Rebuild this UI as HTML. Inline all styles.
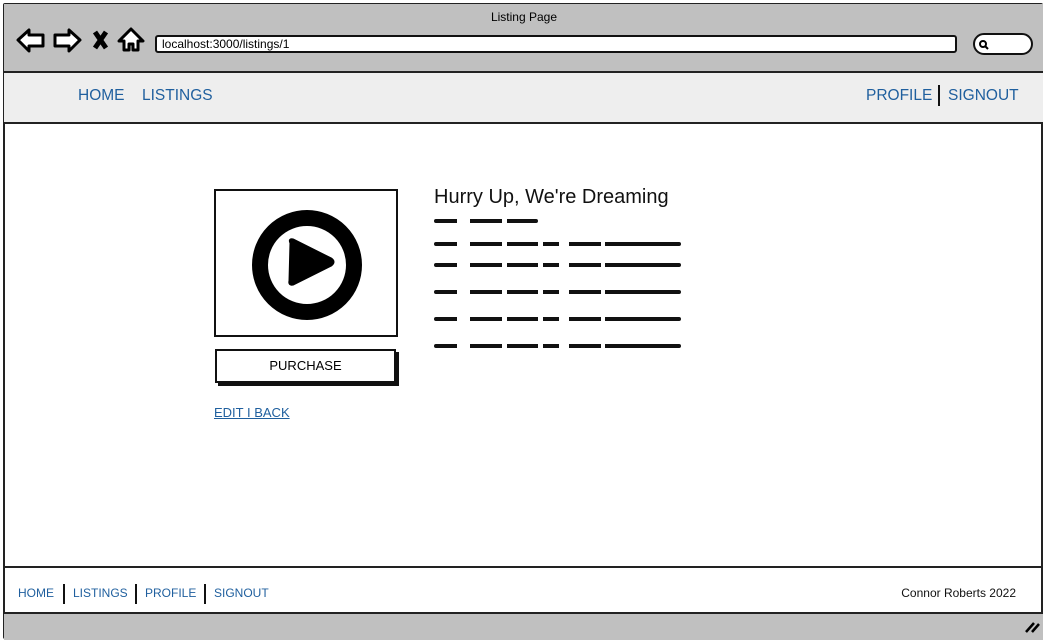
<!DOCTYPE html>
<html><head><style>
body{margin:0;width:1048px;height:644px;background:#fff;position:relative;overflow:hidden;font-family:"Liberation Sans",sans-serif}
.a{position:absolute}
.nav{color:#1f5f9e;font-size:15.5px}
.sq{position:absolute;height:4px;background:#111;border-radius:2px}
.fl{color:#1f5f9e;font-size:12px}
.ln{width:247px;background:linear-gradient(90deg,#111 0 23px,transparent 23px 36px,#111 36px 68px,transparent 68px 73px,#111 73px 104px,transparent 104px 109px,#111 109px 125px,transparent 125px 135px,#111 135px 167px,transparent 167px 171px,#111 171px)}
</style></head><body>
<div class="a" style="left:3px;top:3px;width:1040px;height:636px;border:2px solid #222;box-sizing:border-box;border-radius:2px"></div>
<div class="a" style="left:4px;top:4px;width:1039px;height:67px;background:#c0c0c0;border-bottom:2px solid #222"></div>
<div class="a" style="left:0;top:10px;width:1048px;text-align:center;font-size:12px">Listing Page</div>
<svg class="a" style="left:15px;top:26px" width="130" height="30" viewBox="0 0 130 30" fill="#fff" stroke="#000" stroke-width="3" stroke-linejoin="round">
<path d="M3 14 L14 4 L14 9 L28 9 L28 20 L14 20 L14 25 Z"/>
<path d="M65 14 L54 4 L54 9 L40 9 L40 20 L54 20 L54 25 Z"/>
<path d="M80 6 L91 22 M91 6 L80 22" stroke-width="5"/>
<path d="M104 15 L116 3 L128 15 L123 15 L123 24 L118 24 L118 18 L114 18 L114 24 L109 24 L109 15 Z"/>
</svg>
<div class="a" style="left:155px;top:35px;width:802px;height:18px;background:#fff;border:2px solid #111;border-radius:3px;font-size:12px;line-height:15px;padding-left:5px;box-sizing:border-box">localhost:3000/listings/1</div>
<div class="a" style="left:973px;top:33px;width:60px;height:22px;background:#fff;border:2px solid #111;border-radius:11px;box-sizing:border-box"></div>
<svg class="a" style="left:978px;top:39px" width="12" height="12"><circle cx="5" cy="5" r="3" fill="none" stroke="#000" stroke-width="2"/><path d="M7 7L10 10" stroke="#000" stroke-width="2"/></svg>
<div class="a" style="left:4px;top:73px;width:1039px;height:49px;background:#eee;border-bottom:2px solid #222"></div>
<div class="a nav" style="left:78px;top:87px">HOME</div>
<div class="a nav" style="left:142px;top:87px">LISTINGS</div>
<div class="a nav" style="left:866px;top:87px">PROFILE</div>
<div class="a" style="left:938px;top:85px;width:2px;height:21px;background:#111"></div>
<div class="a nav" style="left:948px;top:87px">SIGNOUT</div>
<div class="a" style="left:214px;top:189px;width:184px;height:148px;border:2px solid #111;box-sizing:border-box"></div>
<svg class="a" style="left:251px;top:209px" width="112" height="112"><circle cx="56" cy="56" r="47" fill="none" stroke="#000" stroke-width="16"/><path d="M40 34 Q38 30 42 31 L80 50 Q84 53 80 56 L42 75 Q38 76 39 72 Z" fill="#000" stroke="#000" stroke-width="3" stroke-linejoin="round"/></svg>
<div class="a" style="left:215px;top:349px;width:181px;height:34px;border:2px solid #111;box-shadow:3px 3px 0 #111;box-sizing:border-box;text-align:center;line-height:30px;font-size:13px">PURCHASE</div>
<div class="a" style="left:214px;top:405px;font-size:13px;color:#1f5f9e;text-decoration:underline">EDIT I BACK</div>
<div class="a" style="left:434px;top:186px;font-size:20px;color:#111">Hurry Up, We're Dreaming</div>
<div class="sq" style="left:434px;top:219px;width:104px;background:linear-gradient(90deg,#111 0 23px,transparent 23px 36px,#111 36px 68px,transparent 68px 73px,#111 73px)"></div>
<div class="sq ln" style="left:434px;top:242px"></div>
<div class="sq ln" style="left:434px;top:263px"></div>
<div class="sq ln" style="left:434px;top:290px"></div>
<div class="sq ln" style="left:434px;top:317px"></div>
<div class="sq ln" style="left:434px;top:344px"></div>
<div class="a" style="left:4px;top:566px;width:1039px;height:2px;background:#222"></div>
<div class="a fl" style="left:18px;top:586px">HOME</div>
<div class="a" style="left:63px;top:584px;width:2px;height:20px;background:#111"></div>
<div class="a fl" style="left:73px;top:586px">LISTINGS</div>
<div class="a" style="left:135px;top:584px;width:2px;height:20px;background:#111"></div>
<div class="a fl" style="left:145px;top:586px">PROFILE</div>
<div class="a" style="left:204px;top:584px;width:2px;height:20px;background:#111"></div>
<div class="a fl" style="left:214px;top:586px">SIGNOUT</div>
<div class="a" style="right:32px;top:586px;font-size:12px;color:#111">Connor Roberts 2022</div>
<div class="a" style="left:4px;top:612px;width:1039px;height:26px;background:#c0c0c0;border-top:2px solid #222"></div>
<svg class="a" style="left:1024px;top:620px" width="16" height="14"><path d="M2 12L10 3M8 12L15 4" stroke="#000" stroke-width="2.5"/></svg>
</body></html>
